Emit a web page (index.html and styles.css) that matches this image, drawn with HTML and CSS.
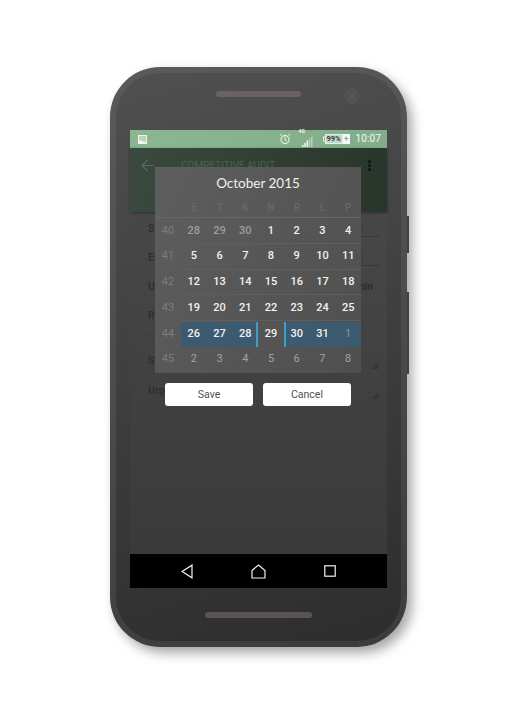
FILE: index.html
```html
<!DOCTYPE html>
<html lang="en">
<head>
<meta charset="utf-8">
<title>Date range</title>
<link rel="stylesheet" href="styles.css">
</head>
<body>
<div class="phone">
  <span class="side side-a"></span>
  <span class="side side-b"></span>
  <div class="body">
    <div class="bezel-top">
      <span class="speaker speaker-top"></span>
      <span class="camera"><i></i></span>
    </div>
    <div class="screen">
      <div class="status">
        <svg class="st-image" width="9" height="9" viewBox="0 0 9 9"><rect x=".5" y=".5" width="8" height="8" fill="#b9d3bd" stroke="#eef5ef"/><path d="M1 8V6l2-1 2 1.500 3 .5v1z" fill="#f4f8f4"/></svg>
        <span class="status-right">
          <svg class="st-alarm" width="12" height="12" viewBox="0 0 12 12" fill="none" stroke="#eef5ef"><circle cx="6" cy="6.600" r="4" stroke-width="1.100"/><path d="M6 4.200v2.600l1.800 1M.8 2.800 2.800 1M11.200 2.800 9.200 1" stroke-width="1"/></svg>
          <span class="signal">
            <b>4G</b>
            <svg width="11" height="11" viewBox="0 0 11 11"><path d="M0 9h1.500v2H0zM2.300 7h1.500v4H2.300zM4.600 4.500h1.500V11H4.600z" fill="#f2f7f2"/><path d="M6.900 2.500h1.400V11H6.900zM9.100 1h1.400v10H9.100z" fill="#f2f7f2" opacity=".5"/></svg>
          </span>
          <span class="battery"><span class="batt-tip"></span><span class="batt-level">99%</span><span class="batt-plug">+</span></span>
          <span class="clock">10:07</span>
        </span>
      </div>
      <div class="app">
        <div class="appbar">
          <svg class="back" width="13" height="13" viewBox="0 0 13 13" fill="none" stroke="#5a6a5e" stroke-width="1.200"><path d="M12.500 6.500H1M6.500 1 1 6.500 6.500 12"/></svg>
          <span class="app-title">COMPETITIVE AUDIT</span>
          <span class="dots"><i></i><i></i><i></i></span>
        </div>
        <div class="form">
          <div class="row row-line"><span>St</span><span class="val">)</span></div>
          <div class="row row-line"><span>En</span><span class="val">)</span></div>
          <div class="row"><span>U</span><span class="val-bold">min</span></div>
          <div class="row"><span>Re</span></div>
          <div class="row row-note"><span>N</span></div>
          <div class="row row-status"><span>St</span><span class="tri"></span></div>
          <div class="row row-urgency"><span>Urg</span><span class="tri"></span></div>
        </div>
        <div class="scrim">
          <div class="dialog">
            <div class="month">October 2015</div>
            <div class="cal cal-head">
              <span></span><span>E</span><span>T</span><span>K</span><span>N</span><span>R</span><span>L</span><span>P</span>
            </div>
            <div class="cal week">
              <span class="wk">40</span><span class="dim">28</span><span class="dim">29</span><span class="dim">30</span><span>1</span><span>2</span><span>3</span><span>4</span>
            </div>
            <div class="cal week">
              <span class="wk">41</span><span>5</span><span>6</span><span>7</span><span>8</span><span>9</span><span>10</span><span>11</span>
            </div>
            <div class="cal week">
              <span class="wk">42</span><span>12</span><span>13</span><span>14</span><span>15</span><span>16</span><span>17</span><span>18</span>
            </div>
            <div class="cal week">
              <span class="wk">43</span><span>19</span><span>20</span><span>21</span><span>22</span><span>23</span><span>24</span><span>25</span>
            </div>
            <div class="cal week week-sel">
              <span class="wk">44</span><span class="sel">26</span><span class="sel">27</span><span class="sel sel-end">28</span><span>29</span><span class="sel sel-start">30</span><span class="sel">31</span><span class="sel sel-dim">1</span>
            </div>
            <div class="cal week week-last">
              <span class="wk">45</span><span class="next">2</span><span class="next">3</span><span class="next">4</span><span class="next">5</span><span class="next">6</span><span class="next">7</span><span class="next">8</span>
            </div>
          </div>
          <div class="actions">
            <button class="btn" type="button">Save</button>
            <button class="btn" type="button">Cancel</button>
          </div>
        </div>
      </div>
      <div class="nav">
        <svg width="12" height="15" viewBox="0 0 12 15" fill="none" stroke="#f4f4f4" stroke-width="1.200"><path d="M11 1.200v12.600L1 7.500z"/></svg>
        <svg width="15" height="15" viewBox="0 0 15 15" fill="none" stroke="#f4f4f4" stroke-width="1.200"><path d="M1 14V6.500L7.500 1 14 6.500V14z"/></svg>
        <svg width="12" height="12" viewBox="0 0 12 12" fill="none" stroke="#f4f4f4" stroke-width="1.200"><rect x=".8" y=".8" width="10.400" height="10.400"/></svg>
      </div>
    </div>
    <div class="bezel-bottom"><span class="speaker speaker-bottom"></span></div>
  </div>
</div>
</body>
</html>
```
FILE: styles.css
```css
* { box-sizing: border-box; }
html, body { margin: 0; height: 100%; background: #fff; }
body { padding: 67px 0 0 110px; font-family: Roboto, "Liberation Sans", sans-serif; overflow: hidden; }

.phone {
  position: relative;
  width: 297px;
  height: 580px;
  padding: 6px;
  border-radius: 50px;
  background: linear-gradient(165deg, #5a5a5a, #3d3c3c);
  box-shadow: 5px 6px 12px rgba(0,0,0,.35);
}
.side { position: absolute; left: 297px; width: 2px; background: #414141; }
.side-a { top: 149px; height: 37px; }
.side-b { top: 225px; height: 82px; }

.body {
  display: flex;
  flex-direction: column;
  height: 100%;
  padding: 0 14px;
  border-radius: 44px;
  background: linear-gradient(165deg, #505050, #2d2d2d);
}
.bezel-top { position: relative; height: 57px; padding-top: 18px; display: flex; justify-content: center; align-items: flex-start; }
.bezel-bottom { height: 53px; display: flex; justify-content: center; align-items: center; }
.speaker { display: block; height: 6px; border-radius: 3px; background: #6a6362; }
.speaker-top { width: 85px; }
.speaker-bottom { width: 107px; background: #5b5454; }
.camera {
  position: absolute; right: 27px; top: 15px; width: 16px; height: 16px;
  border-radius: 50%; background: #535353; display: flex; align-items: center; justify-content: center;
}
.camera i { width: 2px; height: 2px; border-radius: 50%; background: #5d6e78; }

.screen { height: 458px; display: flex; flex-direction: column; }
.status {
  height: 18px; flex: none; display: flex; align-items: center; justify-content: space-between;
  padding: 0 6px 0 8px; background: linear-gradient(100deg, #8ab791, #83ad8a);
  color: #f4f8f4;
}
.st-image { display: block; }
.status-right { display: flex; align-items: center; }
.st-alarm { display: block; margin-right: 11px; }
.signal { position: relative; display: block; width: 11px; height: 11px; margin-right: 10px; top: 2px; }
.signal svg { display: block; }
.signal b { position: absolute; left: -3px; top: -7px; font-size: 5px; line-height: 5px; font-weight: 700; }
.battery { display: flex; align-items: center; height: 10px; margin-right: 6px; }
.batt-tip { width: 2px; height: 6px; border: 1px solid #e6efe7; border-right: 0; border-radius: 2px 0 0 2px; }
.batt-level {
  width: 18px; height: 10px; border: 1px solid #e6efe7; background: #c5d6c8; color: #33423a;
  font-size: 7.500px; line-height: 8px; font-weight: 700; text-align: center;
}
.batt-plug { width: 7px; height: 10px; background: #f6f9f6; color: #83ad8a; font-size: 8px; line-height: 10px; font-weight: 700; text-align: center; }
.clock { font-size: 10px; line-height: 14px; letter-spacing: .1px; }

.app { position: relative; flex: 1; min-height: 0; display: flex; flex-direction: column; background: linear-gradient(#4a4a4a, #3a3a3a); }
.appbar {
  height: 64px; flex: none; display: flex; align-items: flex-start; padding: 11px 16px 0 11px;
  background: linear-gradient(100deg, #3a4a3e, #28352b);
  box-shadow: 0 1px 3px rgba(0,0,0,.35);
}
.back { display: block; }
.app-title { margin: -1px 0 0 27px; font-size: 10px; line-height: 16px; color: #4f5f53; }
.dots { margin-left: auto; width: 3px; display: flex; flex-direction: column; gap: 1px; padding-top: 1px; }
.dots i { width: 3px; height: 3px; border-radius: 50%; background: #111314; }

.form { flex: 1; padding: 2px 7px 0 18px; font-size: 10.500px; font-weight: 700; color: #303030; }
.row { height: 29px; display: flex; align-items: center; justify-content: space-between; }
.row-line { position: relative; }
.row-line::after { content: ""; position: absolute; right: 0; bottom: 6px; width: 46px; height: 1px; background: #383838; }
.row-note { height: 13px; font-style: italic; font-weight: 400; color: #3e3e3e; }
.row-status { height: 35px; }
.row-urgency { height: 25px; }
.val { color: #3b3b3b; font-weight: 400; padding-right: 16px; }
.val-bold { font-weight: 700; font-size: 10px; color: #2c2c2c; padding-right: 7px; }
.tri { width: 0; height: 0; margin: 8px 1px 0 0; border-left: 8px solid transparent; border-bottom: 8px solid #373737; }

.scrim { position: absolute; left: 25px; top: 19px; width: 206px; }
.dialog { background: linear-gradient(120deg, #5e5e5e, #4f4f4f); height: 206px; }
.month { height: 32px; padding-top: 6px; text-align: center; color: #f0f0f0; font-family: Lato, "Open Sans", sans-serif; font-size: 13.500px; line-height: 20px; }
.cal { display: grid; grid-template-columns: 26px repeat(7, 1fr); align-items: center; text-align: center; }
.cal-head { height: 19px; padding-bottom: 2px; font-size: 10px; font-weight: 500; color: #686868; border-bottom: 1px solid #676767; }
.week { height: 25.800px; font-size: 11px; font-weight: 500; color: #f2f2f2; position: relative; align-items: start; }
.week::after { content: ""; position: absolute; left: 26px; right: 0; bottom: 0; height: 1px; background: #5f5f5f; }
.week-last::after, .week-sel::after { display: none; }
.week > span { line-height: 24px; padding: .5px 0 1.300px; display: block; }
.wk { color: #7c7c7c; font-weight: 400; }
.dim { color: #9d9d9d; }
.next { color: #a2a2a2; font-weight: 400; }
.week > .sel { background: #3c5a70; margin-top: .5px; padding-top: 0; }
.week > .sel-dim { color: #7f98a9; font-weight: 400; }
.sel-end { box-shadow: inset -2px 0 0 #3f9dc6; }
.sel-start { box-shadow: inset 2px 0 0 #3f9dc6; }
.actions { display: flex; gap: 10px; padding: 10px 10px 0; }
.btn {
  width: 88px; height: 23px; padding: 0; border: 0; border-radius: 3px; background: #fff; color: #505050;
  font-family: Roboto, "Liberation Sans", sans-serif; font-size: 10.500px;
}

.nav {
  height: 34px; flex: none; background: #000; display: flex; align-items: center; justify-content: space-between;
  padding: 0 51px;
}
.nav svg { display: block; }
```
